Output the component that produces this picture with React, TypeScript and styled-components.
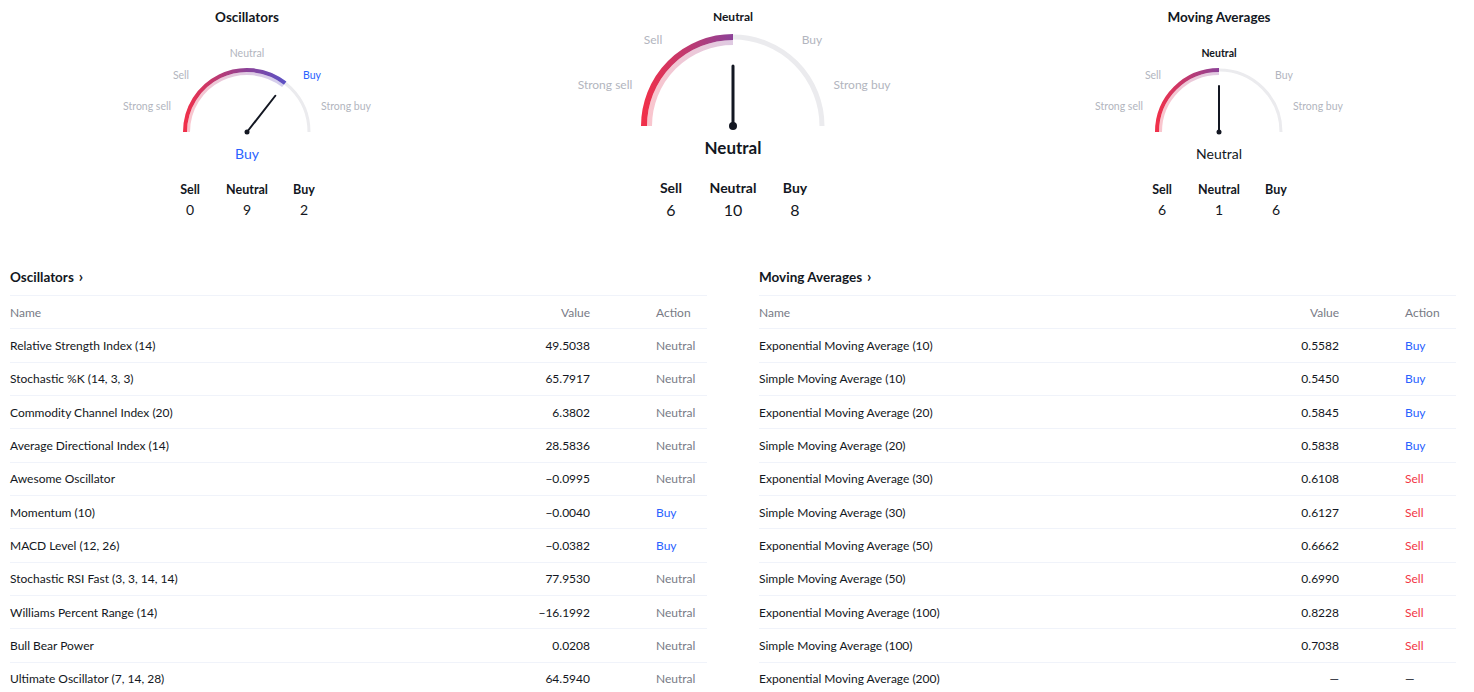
import React from "react";
import styled, { createGlobalStyle } from "styled-components";

const GlobalStyle = createGlobalStyle`
  html, body {
    margin: 0;
    padding: 0;
    background: #ffffff;
    overflow: hidden;
  }
  body {
    font-family: Lato, "Liberation Sans", sans-serif;
    color: #131722;
  }
`;

const BLUE = "#2962ff";
const RED = "#f23645";
const MUTED = "#787b86";
const FAINT = "#b2b5be";

type Signal = "Buy" | "Sell" | "Neutral" | "—";

const signalColor = (s: Signal) =>
  s === "Buy" ? BLUE : s === "Sell" ? RED : s === "Neutral" ? MUTED : "#131722";

const Page = styled.div`
  padding: 8px 18px 0 10px;
`;

const GaugeRow = styled.div`
  display: grid;
  grid-template-columns: repeat(3, 1fr);
  column-gap: 12px;
`;

const GaugeColumn = styled.div`
  display: flex;
  flex-direction: column;
  align-items: center;
`;

const GaugeTitle = styled.div`
  font-size: 13.5px;
  font-weight: 700;
  line-height: 18px;
  height: 18px;
`;

const Dial = styled.svg<{ $top: number }>`
  display: block;
  margin-top: ${(p) => p.$top}px;
  overflow: visible;
`;

const Result = styled.div<{ $big?: boolean; $color: string }>`
  color: ${(p) => p.$color};
  font-size: ${(p) => (p.$big ? "17px" : "14px")};
  font-weight: ${(p) => (p.$big ? 700 : 400)};
  line-height: ${(p) => (p.$big ? "22px" : "20px")};
  margin-top: ${(p) => (p.$big ? "3px" : "4px")};
`;

const Counts = styled.div<{ $big?: boolean }>`
  display: grid;
  grid-template-columns: repeat(3, ${(p) => (p.$big ? 62 : 57)}px);
  margin-top: ${(p) => (p.$big ? "20px" : "18px")};
  text-align: center;
`;

const CountLabel = styled.div<{ $big?: boolean }>`
  font-size: ${(p) => (p.$big ? "14px" : "12.5px")};
  font-weight: 700;
  line-height: ${(p) => (p.$big ? "18px" : "16px")};
`;

const CountValue = styled.div<{ $big?: boolean }>`
  font-size: ${(p) => (p.$big ? "16px" : "14px")};
  line-height: ${(p) => (p.$big ? "22px" : "20px")};
  margin-top: 2px;
`;

type GaugeProps = {
  title?: string;
  big?: boolean;
  angle: number;
  result: Signal;
  counts: [number, number, number];
  id: string;
};

function Gauge({ title, big, angle, result, counts, id }: GaugeProps) {
  const g = big
    ? {
        w: 320, h: 126, cx: 160, cy: 118, r: 89, sw: 6, ir: 83.5, isw: 5,
        needle: 60, nw: 3, dot: 4, fs: 12, top: 0,
        labels: [
          { t: "Strong sell", dx: -128, y: 81 },
          { t: "Sell", dx: -80, y: 36 },
          { t: "Neutral", dx: 0, y: 13 },
          { t: "Buy", dx: 79, y: 36 },
          { t: "Strong buy", dx: 129, y: 81 },
        ],
      }
    : {
        w: 260, h: 104, cx: 130, cy: 96, r: 62, sw: 4, ir: 58.5, isw: 3,
        needle: 46, nw: 2, dot: 2.5, fs: 10.5, top: 10,
        labels: [
          { t: "Strong sell", dx: -100, y: 74 },
          { t: "Sell", dx: -66, y: 43 },
          { t: "Neutral", dx: 0, y: 21 },
          { t: "Buy", dx: 65, y: 43 },
          { t: "Strong buy", dx: 99, y: 74 },
        ],
      };
  const rad = (angle * Math.PI) / 180;
  const arc = (r: number) =>
    `M ${g.cx - r} ${g.cy} A ${r} ${r} 0 0 1 ${g.cx + r * Math.cos(rad)} ${g.cy - r * Math.sin(rad)}`;
  const track = `M ${g.cx - g.r} ${g.cy} A ${g.r} ${g.r} 0 0 1 ${g.cx + g.r} ${g.cy}`;
  const activeColor = result === "Buy" ? BLUE : result === "Sell" ? RED : "#131722";

  return (
    <GaugeColumn>
      {title && <GaugeTitle>{title}</GaugeTitle>}
      <Dial $top={g.top} width={g.w} height={g.h} viewBox={`0 0 ${g.w} ${g.h}`}>
        <defs>
          <linearGradient id={id} gradientUnits="userSpaceOnUse" x1={g.cx - g.r} y1="0" x2={g.cx + g.r} y2="0">
            <stop offset="0" stopColor="#f0304a" />
            <stop offset="0.5" stopColor="#8c4298" />
            <stop offset="1" stopColor="#3f5be0" />
          </linearGradient>
        </defs>
        <path d={track} fill="none" stroke="#ebebee" strokeWidth={g.sw - 1} />
        <path d={arc(g.ir)} fill="none" stroke={`url(#${id})`} strokeOpacity={0.28} strokeWidth={g.isw} />
        <path d={arc(g.r)} fill="none" stroke={`url(#${id})`} strokeWidth={g.sw} />
        {g.labels.map((l) => {
          const active = l.t === result;
          return (
            <text
              key={l.t}
              x={g.cx + l.dx}
              y={l.y}
              textAnchor="middle"
              fontSize={g.fs}
              fontWeight={active && result === "Neutral" ? 700 : 400}
              fill={active ? activeColor : FAINT}
              fontFamily="Lato, 'Liberation Sans', sans-serif"
            >
              {l.t}
            </text>
          );
        })}
        <line
          x1={g.cx}
          y1={g.cy}
          x2={g.cx + g.needle * Math.cos(rad)}
          y2={g.cy - g.needle * Math.sin(rad)}
          stroke="#131722"
          strokeWidth={g.nw}
          strokeLinecap="round"
        />
        <circle cx={g.cx} cy={g.cy} r={g.dot} fill="#131722" />
      </Dial>
      <Result $big={big} $color={activeColor}>
        {result}
      </Result>
      <Counts $big={big}>
        <CountLabel $big={big}>Sell</CountLabel>
        <CountLabel $big={big}>Neutral</CountLabel>
        <CountLabel $big={big}>Buy</CountLabel>
        <CountValue $big={big}>{counts[0]}</CountValue>
        <CountValue $big={big}>{counts[1]}</CountValue>
        <CountValue $big={big}>{counts[2]}</CountValue>
      </Counts>
    </GaugeColumn>
  );
}

const TablesRow = styled.div`
  display: grid;
  grid-template-columns: 1fr 1fr;
  column-gap: 52px;
  margin-top: 46px;
`;

const TableTitle = styled.div`
  font-size: 13.5px;
  font-weight: 700;
  line-height: 18px;
  padding-bottom: 9px;
  border-bottom: 1px solid #f0f3fa;
`;

const Chevron = styled.span`
  margin-left: 5px;
  font-size: 15px;
`;

const Row = styled.div<{ $head?: boolean }>`
  display: grid;
  grid-template-columns: 1fr auto 51px;
  column-gap: 66px;
  align-items: center;
  height: 33.35px;
  box-sizing: border-box;
  border-bottom: 1px solid #f0f3fa;
  font-size: 12px;
  color: ${(p) => (p.$head ? MUTED : "#131722")};
`;

const ValueCell = styled.div`
  text-align: right;
`;

const ActionCell = styled.div<{ $color: string }>`
  color: ${(p) => p.$color};
`;

type Item = [string, string, Signal];

function IndicatorTable({ title, items }: { title: string; items: Item[] }) {
  return (
    <div>
      <TableTitle>
        {title}
        <Chevron>›</Chevron>
      </TableTitle>
      <Row $head>
        <div>Name</div>
        <ValueCell>Value</ValueCell>
        <ActionCell $color={MUTED}>Action</ActionCell>
      </Row>
      {items.map(([name, value, action]) => (
        <Row key={name}>
          <div>{name}</div>
          <ValueCell>{value}</ValueCell>
          <ActionCell $color={signalColor(action)}>{action}</ActionCell>
        </Row>
      ))}
    </div>
  );
}

const oscillators: Item[] = [
  ["Relative Strength Index (14)", "49.5038", "Neutral"],
  ["Stochastic %K (14, 3, 3)", "65.7917", "Neutral"],
  ["Commodity Channel Index (20)", "6.3802", "Neutral"],
  ["Average Directional Index (14)", "28.5836", "Neutral"],
  ["Awesome Oscillator", "−0.0995", "Neutral"],
  ["Momentum (10)", "−0.0040", "Buy"],
  ["MACD Level (12, 26)", "−0.0382", "Buy"],
  ["Stochastic RSI Fast (3, 3, 14, 14)", "77.9530", "Neutral"],
  ["Williams Percent Range (14)", "−16.1992", "Neutral"],
  ["Bull Bear Power", "0.0208", "Neutral"],
  ["Ultimate Oscillator (7, 14, 28)", "64.5940", "Neutral"],
];

const movingAverages: Item[] = [
  ["Exponential Moving Average (10)", "0.5582", "Buy"],
  ["Simple Moving Average (10)", "0.5450", "Buy"],
  ["Exponential Moving Average (20)", "0.5845", "Buy"],
  ["Simple Moving Average (20)", "0.5838", "Buy"],
  ["Exponential Moving Average (30)", "0.6108", "Sell"],
  ["Simple Moving Average (30)", "0.6127", "Sell"],
  ["Exponential Moving Average (50)", "0.6662", "Sell"],
  ["Simple Moving Average (50)", "0.6990", "Sell"],
  ["Exponential Moving Average (100)", "0.8228", "Sell"],
  ["Simple Moving Average (100)", "0.7038", "Sell"],
  ["Exponential Moving Average (200)", "—", "—"],
];

export default function App() {
  return (
    <Page>
      <GlobalStyle />
      <GaugeRow>
        <Gauge id="g-osc" title="Oscillators" angle={52} result="Buy" counts={[0, 9, 2]} />
        <Gauge id="g-sum" big angle={90} result="Neutral" counts={[6, 10, 8]} />
        <Gauge id="g-ma" title="Moving Averages" angle={90} result="Neutral" counts={[6, 1, 6]} />
      </GaugeRow>
      <TablesRow>
        <IndicatorTable title="Oscillators" items={oscillators} />
        <IndicatorTable title="Moving Averages" items={movingAverages} />
      </TablesRow>
    </Page>
  );
}
